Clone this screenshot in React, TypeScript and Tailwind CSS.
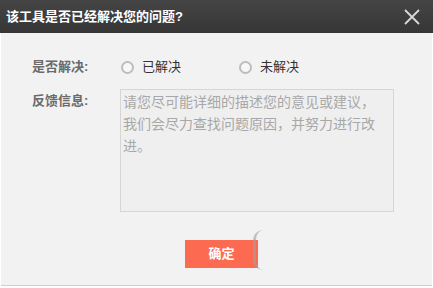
import React from "react";

const font = { fontFamily: '"Liberation Sans", "Noto Sans CJK SC", sans-serif' };

const Radio = ({ label }: { label: string }) => (
  <label className="flex items-center gap-[8px] cursor-pointer">
    <span className="w-[13px] h-[13px] rounded-full border-[2px] border-[#bdbdbd] bg-[#f7f7f7]" />
    <span className="text-[13px] text-[#333]">{label}</span>
  </label>
);

export default function App() {
  return (
    <div className="w-[433px] h-[288px] bg-white flex flex-col" style={font}>
      {/* title bar */}
      <div className="h-[33px] flex items-center justify-between pl-[6px] pr-[12px] bg-gradient-to-b from-[#454545] to-[#363636]">
        <h1 className="text-white text-[13px] font-bold">该工具是否已经解决您的问题?</h1>
        <svg width="16" height="16" viewBox="0 0 16 16" className="mr-[1px]">
          <path d="M1 1 L15 15 M15 1 L1 15" stroke="#d8d8d8" strokeWidth="1.8" />
        </svg>
      </div>

      {/* body */}
      <div className="flex-1 mx-[1px] mb-[2px] bg-[#f2f2f2] border-b border-[#d0d0d0] flex flex-col">
        <div className="flex items-center h-[20px] mt-[24px] pl-[31px]">
          <span className="w-[89px] text-[13px] font-bold text-[#6a6a6a]">是否解决:</span>
          <div className="flex gap-[58px]">
            <Radio label="已解决" />
            <Radio label="未解决" />
          </div>
        </div>

        <div className="flex mt-[12px] pl-[31px]">
          <span className="w-[88px] text-[13px] font-bold text-[#6a6a6a] pt-[2px]">反馈信息:</span>
          <textarea
            className="w-[274px] h-[123px] bg-[#efefef] border border-[#d6d6d6] resize-none outline-none pl-[2px] pr-[12px] pt-[1px] text-[14px] leading-[22px] placeholder:text-[#a8a8a8]"
            placeholder="请您尽可能详细的描述您的意见或建议，我们会尽力查找问题原因，并努力进行改进。"
          />
        </div>

        <div className="flex justify-center mt-[28px] pl-[10px]">
          <div className="relative">
            <button className="w-[73px] h-[28px] bg-[#fd6a52] text-white text-[13px] font-bold">确定</button>
            <span className="absolute left-[68px] top-[-10px] w-[20px] h-[40px] rounded-full border-l-[3px] border-[#a0a0a0] opacity-60" />
          </div>
        </div>
      </div>
    </div>
  );
}
